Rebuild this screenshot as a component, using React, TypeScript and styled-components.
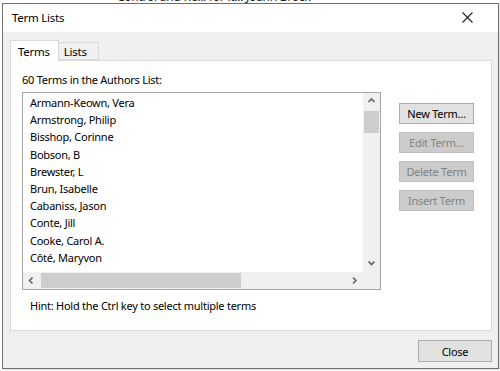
import React from "react";
import styled, { createGlobalStyle } from "styled-components";

const Global = createGlobalStyle`
  html, body { margin: 0; padding: 0; background: #ffffff; }
  body { font-family: "Segoe UI", "Noto Sans", sans-serif; font-size: 11px; letter-spacing: -0.25px; color: #000; }
  * { box-sizing: border-box; }
`;

const Page = styled.div`
  width: 500px;
  height: 371px;
  padding: 0 0 0 2px;
  overflow: hidden;
  position: relative;
`;

const BackStrip = styled.div`
  height: 3px;
  overflow: hidden;
  position: relative;
`;

const BackText = styled.div`
  position: absolute;
  left: 115px;
  top: -9px;
  font-size: 12px;
  line-height: 12px;
  white-space: nowrap;
  color: #222;
`;

const Dialog = styled.div`
  width: 497px;
  height: 366px;
  border: 1px solid #6f6f6f;
  display: flex;
  flex-direction: column;
  background: #f0f0f0;
  box-shadow: 1px 1px 2px rgba(0,0,0,0.15);
`;

const TitleBar = styled.div`
  height: 28px;
  background: #ffffff;
  display: flex;
  align-items: center;
  justify-content: space-between;
  padding: 0 25px 1px 9px;
  flex-shrink: 0;
`;

const Title = styled.span`
  font-size: 11.5px;
`;

const Body = styled.div`
  flex: 1;
  display: flex;
  flex-direction: column;
  padding: 8px 6px 0 7px;
`;

const TabRow = styled.div`
  display: flex;
  align-items: flex-end;
  height: 20px;
  position: relative;
  z-index: 1;
`;

const Tab = styled.div<{ $active?: boolean }>`
  height: ${(p) => (p.$active ? "21px" : "18px")};
  margin-bottom: ${(p) => (p.$active ? "-1px" : "0")};
  padding: ${(p) => (p.$active ? "1px 8px 0 7px" : "0 11px 0 5px")};
  background: ${(p) => (p.$active ? "#ffffff" : "#f0f0f0")};
  border: 1px solid #d9d9d9;
  border-bottom: ${(p) => (p.$active ? "none" : "1px solid #d9d9d9")};
  border-left: ${(p) => (p.$active ? "1px solid #d9d9d9" : "none")};
  display: flex;
  align-items: center;
  font-size: 11.5px;
`;

const Panel = styled.div`
  height: 271px;
  background: #ffffff;
  border: 1px solid #d9d9d9;
  padding: 6px 0 0 11px;
  display: flex;
  flex-direction: column;
`;

const Label = styled.div`
  height: 25px;
  line-height: 25px;
`;

const Row = styled.div`
  display: flex;
  gap: 18px;
`;

const ListBox = styled.div`
  width: 359px;
  height: 198px;
  border: 1px solid #a5a5a5;
  display: grid;
  grid-template-columns: 1fr 17px;
  grid-template-rows: 1fr 17px;
  background: #fff;
`;

const Items = styled.div`
  padding: 1px 0 0 7px;
  overflow: hidden;
`;

const Item = styled.div`
  height: 17.2px;
  line-height: 17px;
  white-space: nowrap;
`;

const VScroll = styled.div`
  background: #f0f0f0;
  display: flex;
  flex-direction: column;
  align-items: center;
`;

const HScroll = styled.div`
  background: #f0f0f0;
  display: flex;
  align-items: center;
`;

const Corner = styled.div`
  background: #f0f0f0;
`;

const ArrowBox = styled.div`
  width: 17px;
  height: 17px;
  display: flex;
  align-items: center;
  justify-content: center;
  flex-shrink: 0;
`;

const VTrack = styled.div`
  flex: 1;
  width: 100%;
  padding: 1px 1px;
`;

const VThumb = styled.div`
  height: 22px;
  width: 15px;
  background: #cdcdcd;
`;

const HTrack = styled.div`
  flex: 1;
  height: 100%;
  padding: 1px 1px;
`;

const HThumb = styled.div`
  width: 200px;
  height: 15px;
  background: #cdcdcd;
`;

const Buttons = styled.div`
  display: flex;
  flex-direction: column;
  gap: 8px;
  margin-top: 11px;
`;

const Btn = styled.div<{ $disabled?: boolean }>`
  width: 75px;
  height: 21px;
  display: flex;
  align-items: center;
  justify-content: center;
  background: ${(p) => (p.$disabled ? "#cccccc" : "#e1e1e1")};
  border: 1px solid ${(p) => (p.$disabled ? "#bfbfbf" : "#adadad")};
  color: ${(p) => (p.$disabled ? "#838383" : "#000")};
`;

const Hint = styled.div`
  margin: 4px 0 0 8px;
  height: 24px;
  line-height: 24px;
`;

const Footer = styled.div`
  display: flex;
  justify-content: flex-end;
  padding-top: 9px;
`;

const CloseBtn = styled(Btn)`
  width: 74px;
  height: 22px;
`;

const names = [
  "Armann-Keown, Vera",
  "Armstrong, Philip",
  "Bisshop, Corinne",
  "Bobson, B",
  "Brewster, L",
  "Brun, Isabelle",
  "Cabaniss, Jason",
  "Conte, Jill",
  "Cooke, Carol A.",
  "Côté, Maryvon",
];

const Chevron = ({ dir }: { dir: "up" | "down" | "left" | "right" }) => {
  const d =
    dir === "up"
      ? "M1.5 5 L4.5 2 L7.5 5"
      : dir === "down"
      ? "M1.5 2.5 L4.5 5.5 L7.5 2.5"
      : dir === "left"
      ? "M5.5 1.5 L2.5 4.5 L5.5 7.5"
      : "M3 1.5 L6 4.5 L3 7.5";
  return (
    <svg width="9" height="9" viewBox="0 0 9 9">
      <path d={d} fill="none" stroke="#606060" strokeWidth="1.6" />
    </svg>
  );
};

export default function App() {
  return (
    <Page>
      <Global />
      <BackStrip>
        <BackText>Control and Re... for it... Joann Brock</BackText>
      </BackStrip>
      <Dialog>
        <TitleBar>
          <Title>Term Lists</Title>
          <svg width="11" height="11" viewBox="0 0 11 11">
            <path d="M0.5 0.5 L10.5 10.5 M10.5 0.5 L0.5 10.5" stroke="#222" strokeWidth="1.1" />
          </svg>
        </TitleBar>
        <Body>
          <TabRow>
            <Tab $active>Terms</Tab>
            <Tab>Lists</Tab>
          </TabRow>
          <Panel>
            <Label>60 Terms in the Authors List:</Label>
            <Row>
              <ListBox>
                <Items>
                  {names.map((n) => (
                    <Item key={n}>{n}</Item>
                  ))}
                </Items>
                <VScroll>
                  <ArrowBox><Chevron dir="up" /></ArrowBox>
                  <VTrack><VThumb /></VTrack>
                  <ArrowBox><Chevron dir="down" /></ArrowBox>
                </VScroll>
                <HScroll>
                  <ArrowBox><Chevron dir="left" /></ArrowBox>
                  <HTrack><HThumb /></HTrack>
                  <ArrowBox><Chevron dir="right" /></ArrowBox>
                </HScroll>
                <Corner />
              </ListBox>
              <Buttons>
                <Btn>New Term...</Btn>
                <Btn $disabled>Edit Term...</Btn>
                <Btn $disabled>Delete Term</Btn>
                <Btn $disabled>Insert Term</Btn>
              </Buttons>
            </Row>
            <Hint>Hint: Hold the Ctrl key to select multiple terms</Hint>
          </Panel>
          <Footer>
            <CloseBtn>Close</CloseBtn>
          </Footer>
        </Body>
      </Dialog>
    </Page>
  );
}
